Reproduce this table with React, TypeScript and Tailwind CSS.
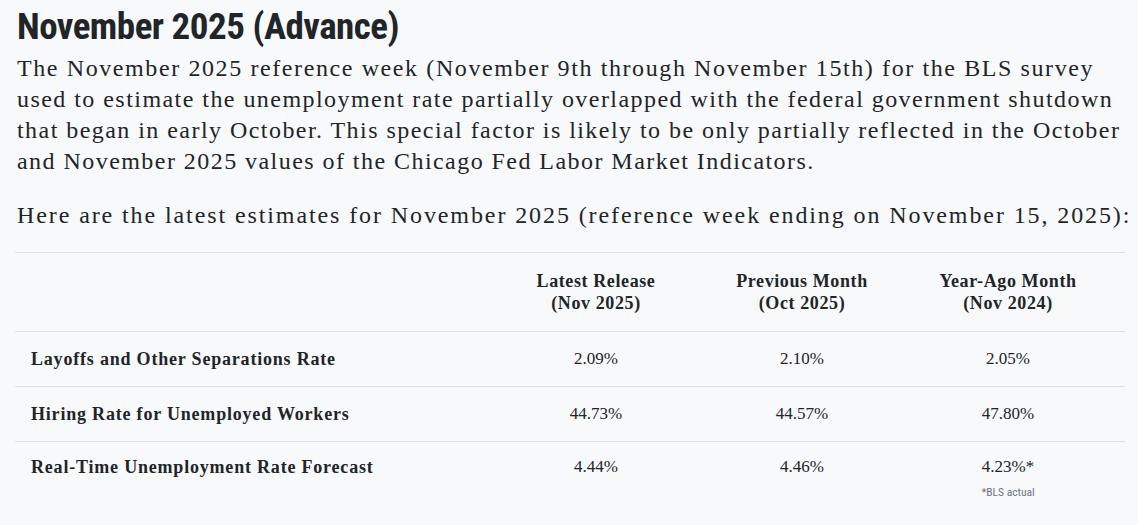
import React from "react";

const serif = { fontFamily: '"Liberation Serif", serif' };

const rows = [
  { label: "Layoffs and Other Separations Rate", v: ["2.09%", "2.10%", "2.05%"] },
  { label: "Hiring Rate for Unemployed Workers", v: ["44.73%", "44.57%", "47.80%"] },
  { label: "Real-Time Unemployment Rate Forecast", v: ["4.44%", "4.46%", "4.23%*"], note: "*BLS actual" },
];

const lines = [
  "The November 2025 reference week (November 9th through November 15th) for the BLS survey",
  "used to estimate the unemployment rate partially overlapped with the federal government shutdown",
  "that began in early October. This special factor is likely to be only partially reflected in the October",
  "and November 2025 values of the Chicago Fed Labor Market Indicators.",
];

export default function App() {
  return (
    <div className="w-[1138px] h-[525px] overflow-hidden bg-[#f8f9fa] text-[#212529] pl-[17px] pr-[13px] pt-[6px]">
      <h1
        className="text-[37px] leading-[42px] font-bold tracking-[-0.5px]"
        style={{ fontFamily: 'Roboto, "Liberation Sans", sans-serif', fontStretch: "condensed" }}
      >
        November 2025 (Advance)
      </h1>
      <p className="mt-[5px] text-[24px] leading-[31px] tracking-[1.45px]" style={serif}>
        {lines.map((l, i) => (
          <span key={i} className={"block whitespace-nowrap " + (i === 0 ? "tracking-[1.6px]" : "")}>
            {l}
          </span>
        ))}
      </p>
      <p className="mt-[23px] text-[24px] leading-[31px] tracking-[1.9px] whitespace-nowrap" style={serif}>
        Here are the latest estimates for November 2025 (reference week ending on November 15, 2025):
      </p>
      <div className="-ml-[2px] mt-[21px] border-t border-[#dee2e6]" style={serif}>
        <div className="grid grid-cols-[478px_206px_206px_206px_1fr] h-[79px] items-center border-b border-[#dee2e6] text-[18px] leading-[22px] font-bold tracking-[0.6px]">
          <div />
          <div className="text-center">Latest Release<br />(Nov 2025)</div>
          <div className="text-center">Previous Month<br />(Oct 2025)</div>
          <div className="text-center">Year-Ago Month<br />(Nov 2024)</div>
          <div />
        </div>
        {rows.map((r, i) => (
          <div
            key={i}
            className={
              "grid grid-cols-[478px_206px_206px_206px_1fr] text-[17px] leading-[22px] " +
              (r.note ? "pt-[14px] h-[90px]" : "h-[55px] items-center border-b border-[#dee2e6]")
            }
          >
            <div
              className="pl-[16px] font-bold text-[18px] tracking-[0.8px] whitespace-nowrap"
              style={{ alignSelf: r.note ? "start" : "center" }}
            >
              {r.label}
            </div>
            {r.v.map((v, j) => (
              <div key={j} className="text-center">
                <div>{v}</div>
                {r.note && j === 2 ? (
                  <div
                    className="text-[11.5px] leading-[18px] mt-[5px] text-[#6c757d]"
                    style={{ fontFamily: 'Roboto, "Liberation Sans", sans-serif', fontStretch: "condensed" }}
                  >
                    {r.note}
                  </div>
                ) : null}
              </div>
            ))}
            <div />
          </div>
        ))}
      </div>
    </div>
  );
}
